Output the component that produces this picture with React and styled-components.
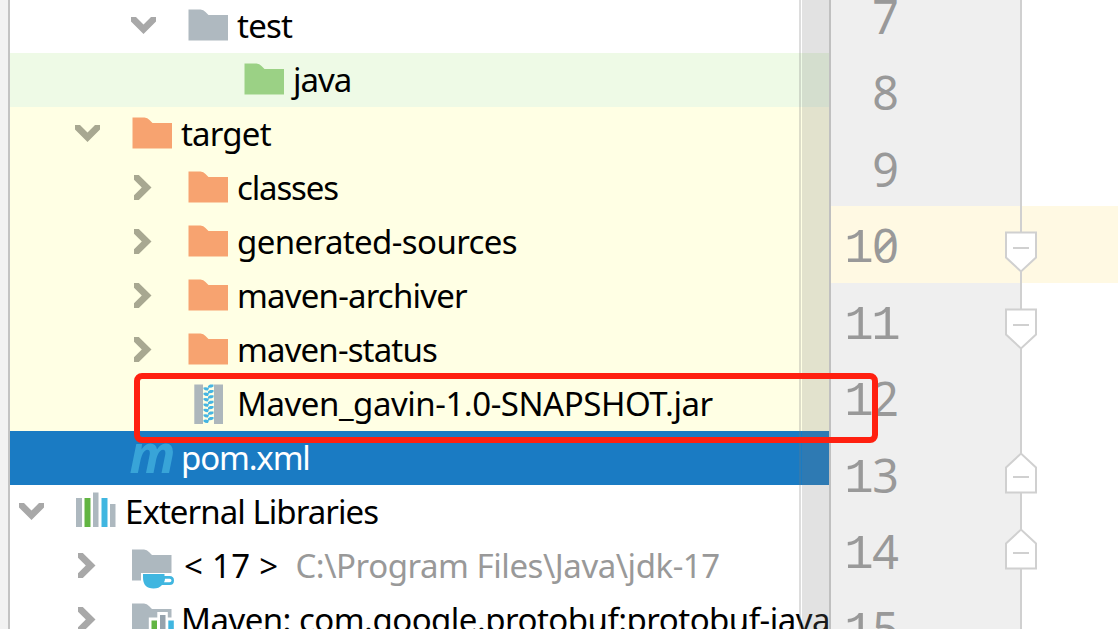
import styled, { createGlobalStyle } from 'styled-components'

const GlobalStyle = createGlobalStyle`
  body {
    margin: 0;
    background: #fff;
    overflow: hidden;
  }
`

const Window = styled.div`
  position: relative;
  display: flex;
  width: 1118px;
  height: 629px;
  overflow: hidden;
  font-family: "Noto Sans", "Open Sans", sans-serif;
`

const Stripe = styled.div`
  width: 8px;
  background: #f2f2f2;
  border-right: 2px solid #c3c3c3;
`

const Tree = styled.div`
  position: relative;
  width: 819px;
  height: 630px;
  margin-top: -1px;
  overflow: hidden;
  border-right: 2px solid #c0c0c0;
`

const Row = styled.div`
  display: flex;
  height: 54px;
  padding-left: ${(p) => 9 + p.$depth * 56}px;
  background: ${(p) => p.$bg || '#fff'};
  color: ${(p) => p.$color || '#000'};
`

const ArrowSlot = styled.div`
  flex: none;
  width: 57px;
  height: 54px;
  color: ${(p) => (p.$tinted ? '#a8a891' : '#a8a8a8')};
`

const IconSlot = styled.div`
  flex: none;
  width: 49px;
  height: 54px;
`

const Svg = styled.svg`
  display: block;
  overflow: visible;
`

const Label = styled.span`
  font-size: 33px;
  line-height: 54px;
  white-space: pre;
  letter-spacing: ${(p) => p.$spacing || 0}px;
  margin-left: ${(p) => p.$shift || 0}px;
`

const Path = styled(Label)`
  color: #999;
`

const Scrollbar = styled.div`
  position: absolute;
  top: 0;
  right: 0;
  bottom: 0;
  width: 27px;
  background: rgba(120, 120, 120, 0.214);

  &::before {
    content: '';
    position: absolute;
    left: -3px;
    width: 2px;
    height: 100%;
    background: rgba(120, 120, 120, 0.25);
  }
`

const Editor = styled.div`
  flex: 1;
  margin-top: -23.5px;
`

const Line = styled.div`
  display: flex;
  height: 76.5px;
  background: ${(p) => (p.$active ? '#fff9e3' : '#fff')};
`

const Gutter = styled.div`
  position: relative;
  display: flex;
  justify-content: flex-end;
  box-sizing: border-box;
  width: 191px;
  padding-right: 121px;
  border-right: 2px solid #d0d0d0;
  background: ${(p) => (p.$active ? '#fff9e3' : '#efefef')};
  color: #999;
`

const Digit = styled.span`
  display: flex;
  justify-content: center;
  width: 27px;
  font-size: 46.5px;
  line-height: 79px;
  font-feature-settings: "zero";
`

const One = styled(Digit)`
  box-sizing: border-box;
  padding-left: 1px;
  font-family: "Liberation Mono", monospace;
  font-size: 49px;
  line-height: 87px;
`

const Fold = styled.svg`
  position: absolute;
  right: -18px;
  top: ${(p) => p.$top}px;
  z-index: 1;
`

const Highlight = styled.div`
  position: absolute;
  left: 134px;
  top: 373px;
  box-sizing: border-box;
  width: 744px;
  height: 70px;
  border: 6.5px solid #ff2010;
  border-radius: 8px;
  z-index: 2;
`

const ArrowDown = () => (
  <Svg width="57" height="54">
    <path d="M0 18h5l7.500 7.600 7.500-7.600h5v4.500L12.500 35 0 22.500z" fill="currentColor" />
  </Svg>
)

const ArrowRight = () => (
  <Svg width="57" height="54">
    <path d="M3 14h4.800L20.500 26.500 7.800 39H3v-4.800l7.800-7.700L3 18.800z" fill="currentColor" />
  </Svg>
)

const Folder = ({ color }) => (
  <Svg width="49" height="54">
    <path d="M.5 10.500h12q3 0 5 2.500l3 3h19.500v25.500H.5z" fill={color} />
  </Svg>
)

const Jar = () => (
  <Svg width="49" height="54">
    <path d="M6.300 7.500h8.700v39.500h-8.700zM26 7.500h9v39.500h-9z" fill="#adb7bc" />
    {[0, 1, 2, 3, 4, 5, 6].map((i) => (
      <g key={i} transform={`translate(.5 ${i * 5.4})`} fill="#45b5e2">
        <path d="M15 10.500q2.500-.8 5.500.5l-1 2.500q-2.500.5-4.500-1.500zM19.500 9l2-1.500h3.500v2q-2.500 1.800-5.500 1z" />
      </g>
    ))}
  </Svg>
)

const MavenIcon = () => (
  <Svg width="49" height="54">
    <text
      x="-2.500"
      y="42"
      fontFamily="Noto Sans, sans-serif"
      fontSize="53"
      fontWeight="700"
      fontStyle="italic"
      textLength="46"
      lengthAdjust="spacingAndGlyphs"
      fill="#38a4d8"
    >
      m
    </text>
  </Svg>
)

const Libraries = () => (
  <Svg width="49" height="54">
    <path d="M0 13h6v29H0zM17 7.500h5.500V42H17zM34 19h5.500v23H34z" fill="#adb8bf" />
    <path d="M8.500 13h6v29h-6z" fill="#62b543" />
    <path d="M25.500 13h6v29h-6z" fill="#40b6e0" />
  </Svg>
)

const Jdk = () => (
  <Svg width="49" height="54">
    <path d="M0 10.500h12q3 0 5 2.500l3 3h19.500v18H9v7.500H0z" fill="#adb8bf" />
    <path d="M11 35h21.500v2h5q4.500 0 4.500 4.500T37.500 46H30q-3 3.500-8.500 3.500Q11 49.500 11 38.500z" fill="#40b6e0" />
    <path d="M33 39.800h4.500q2 0 2 1.700t-2 1.700H32q1-1.500 1-3.400z" fill="#fff" />
  </Svg>
)

const MavenLib = () => (
  <Svg width="49" height="54">
    <path d="M0 10.500h12q3 0 5 2.500l3 3h19.500v26H0z" fill="#adb8bf" />
    <path d="M16.800 24.500h8.500v-5.500h10.500v5.500h9V54h-28z" fill="#fff" />
    <path d="M19.500 27.500H25v26.500h-5.500z" fill="#62b543" />
    <path d="M28 22h5.500v32H28z" fill="#96a3ad" />
    <path d="M36.300 27.500h5.500v26.500h-5.500z" fill="#40b6e0" />
  </Svg>
)

const cream = '#ffffe4'

const rows = [
  { depth: 2, arrow: 'down', icon: <Folder color="#afb9c0" />, text: 'test', spacing: -0.75 },
  { depth: 3, bg: '#eefae6', icon: <Folder color="#9bd185" />, text: 'java', spacing: -1 },
  { depth: 1, arrow: 'down', bg: cream, icon: <Folder color="#f7a370" />, text: 'target', spacing: -0.8 },
  { depth: 2, arrow: 'right', bg: cream, icon: <Folder color="#f7a370" />, text: 'classes', spacing: -1.15 },
  { depth: 2, arrow: 'right', bg: cream, icon: <Folder color="#f7a370" />, text: 'generated-sources', spacing: -0.6 },
  { depth: 2, arrow: 'right', bg: cream, icon: <Folder color="#f7a370" />, text: 'maven-archiver', spacing: -0.8 },
  { depth: 2, arrow: 'right', bg: cream, icon: <Folder color="#f7a370" />, text: 'maven-status', spacing: -0.85 },
  { depth: 2, bg: cream, icon: <Jar />, text: 'Maven_gavin-1.0-SNAPSHOT.jar', spacing: -0.46 },
  { depth: 1, bg: '#1a7bc3', color: '#fff', icon: <MavenIcon />, text: 'pom.xml', spacing: -1.15 },
  { depth: 0, arrow: 'down', icon: <Libraries />, text: 'External Libraries', spacing: -0.95 },
  {
    depth: 1,
    arrow: 'right',
    icon: <Jdk />,
    text: '< 17 >',
    spacing: 0.3,
    shift: 3,
    path: 'C:\\Program Files\\Java\\jdk-17',
    pathSpacing: -0.45,
  },
  { depth: 1, arrow: 'right', icon: <MavenLib />, text: 'Maven: com.google.protobuf:protobuf-java', spacing: -0.52 },
]

const lines = [
  { n: '7' },
  { n: '8' },
  { n: '9' },
  { n: '10', fold: 'down', active: true },
  { n: '11', fold: 'down' },
  { n: '12' },
  { n: '13', fold: 'up' },
  { n: '14', fold: 'up' },
  { n: '15' },
]

const FoldMark = ({ dir }) => (
  <Fold width="34" height="42" $top={dir === 'down' ? 25 : 16}>
    <path
      d={dir === 'down' ? 'M2 1.500h30v25L17 40.500 2 26.500z' : 'M2 40.500h30v-25L17 1.500 2 15.500z'}
      fill="#fff"
      stroke="#d0d0d0"
      strokeWidth="2"
    />
    <path d={dir === 'down' ? 'M9 17h16' : 'M9 25h16'} stroke="#d0d0d0" strokeWidth="2" />
  </Fold>
)

const App = () => {
  return (
    <Window>
      <GlobalStyle />
      <Stripe />
      <Tree>
        {rows.map((row) => (
          <Row key={row.text} $depth={row.depth} $bg={row.bg} $color={row.color}>
            <ArrowSlot $tinted={row.bg === cream}>
              {row.arrow === 'down' && <ArrowDown />}
              {row.arrow === 'right' && <ArrowRight />}
            </ArrowSlot>
            <IconSlot>{row.icon}</IconSlot>
            <Label $spacing={row.spacing} $shift={row.shift}>{row.text}</Label>
            {row.path && <Path $shift={17} $spacing={row.pathSpacing}>{row.path}</Path>}
          </Row>
        ))}
        <Scrollbar />
      </Tree>
      <Editor>
        {lines.map((line) => (
          <Line key={line.n} $active={line.active}>
            <Gutter $active={line.active}>
              {line.n.split('').map((d, i) => (
                d === '1' ? <One key={i}>{d}</One> : <Digit key={i}>{d}</Digit>
              ))}
              {line.fold && <FoldMark dir={line.fold} />}
            </Gutter>
          </Line>
        ))}
      </Editor>
      <Highlight />
    </Window>
  )
}

export default App
